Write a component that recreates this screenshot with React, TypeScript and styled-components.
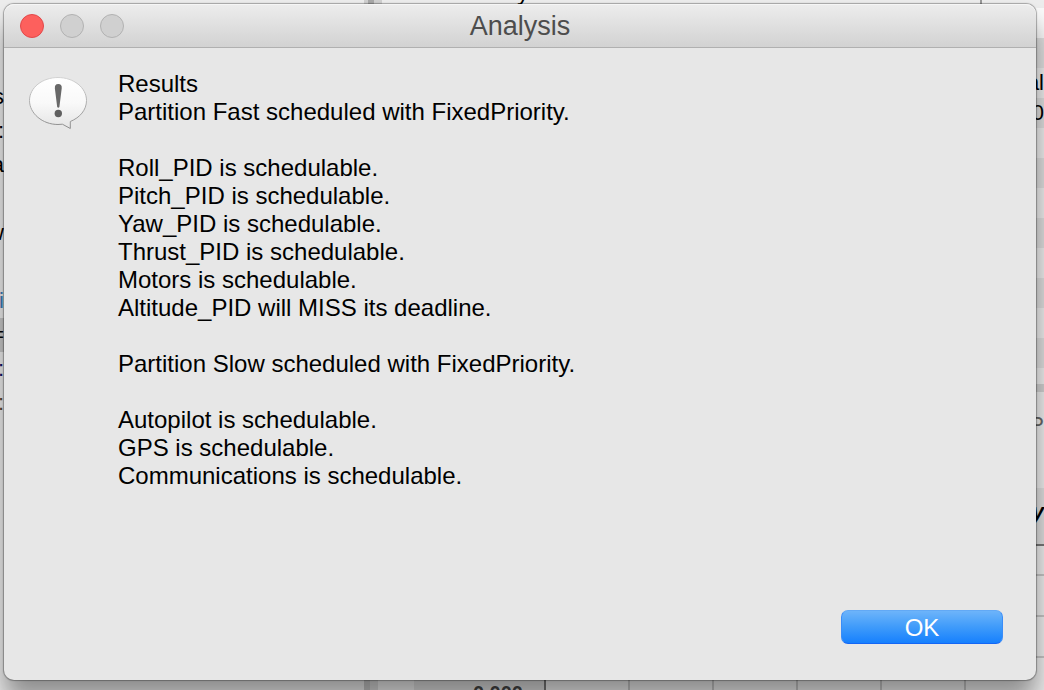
import React from "react";
import styled, { createGlobalStyle } from "styled-components";

const GlobalStyle = createGlobalStyle`
  * { box-sizing: border-box; }
  body {
    margin: 0;
    background: #ededed;
    color: #000;
    font: 24px/28px "Liberation Sans", Helvetica, Arial, sans-serif;
  }
`;

const Screen = styled.div`
  position: relative;
  display: flex;
  min-height: 100vh;
  padding: 4px 8px 10px 4px;
  overflow: hidden;
`;

/* The application window that lies behind the dialog. */
const Backdrop = styled.div`
  position: absolute;
  inset: 0;
  display: grid;
  grid-template-columns: 4px 1fr 8px;
  overflow: hidden;
`;

const EditorColumn = styled.div`
  padding-top: 80px;
  overflow: hidden;
`;

const EditorLine = styled.div<{ $selected?: boolean; $color?: string }>`
  display: flex;
  justify-content: flex-end;
  height: 34px;
  line-height: 34px;
  font-size: 22px;
  color: ${(p) => p.$color ?? "#000"};
  background: ${(p) => (p.$selected ? "#c8c8c8" : "transparent")};
`;

const Middle = styled.div`
  display: flex;
  flex-direction: column;
  justify-content: space-between;
  min-width: 0;
`;

const Strip = styled.div<{ $height: number }>`
  display: flex;
  height: ${(p) => p.$height}px;
  overflow: hidden;
`;

const Segment = styled.div<{ $width?: number; $fill?: string }>`
  flex: ${(p) => (p.$width ? `0 0 ${p.$width}px` : "1")};
  background: ${(p) => p.$fill ?? "transparent"};
`;

const HeadingTail = styled(Segment)`
  display: flex;
  align-items: flex-end;
  justify-content: flex-end;
  font-size: 24px;
  line-height: 24px;
`;

const AxisLabel = styled(Segment)`
  padding: 3px 21px 0 0;
  text-align: right;
  font-size: 20px;
  line-height: 20px;
  font-weight: bold;
  color: #444;
`;

const GridLines = styled(Segment)`
  background: repeating-linear-gradient(90deg, transparent 0 82px, #c4c4c4 82px 84px);
`;

const TableColumn = styled.div`
  overflow: hidden;
`;

const Cell = styled.div<{ $height: number; $fill?: string; $color?: string }>`
  display: flex;
  align-items: center;
  justify-content: flex-end;
  height: ${(p) => p.$height}px;
  font-size: 22px;
  line-height: 30px;
  color: ${(p) => p.$color ?? "#000"};
  background: ${(p) => p.$fill ?? "#ededed"};
`;

const PlotTitle = styled(Cell)`
  padding-bottom: 8px;
  font-weight: bold;
  font-style: italic;
  border-bottom: 2px solid #777;
`;

const Dialog = styled.section`
  position: relative;
  display: flex;
  flex: 1;
  flex-direction: column;
  min-width: 0;
  border-radius: 10px;
  background: #e7e7e7;
  box-shadow: 0 0 1px 1px rgba(0, 0, 0, 0.3), 0 20px 26px rgba(0, 0, 0, 0.4);
`;

const TitleBar = styled.header`
  display: grid;
  grid-template-columns: 1fr auto 1fr;
  align-items: center;
  height: 44px;
  padding: 0 16px;
  border-radius: 10px 10px 0 0;
  border-bottom: 1px solid #b0b0b0;
  background: linear-gradient(#ededed, #d2d2d2);
  box-shadow: inset 0 1px #f6f6f6;
`;

const WindowButtons = styled.div`
  display: flex;
  gap: 16px;
`;

const WindowButton = styled.button<{ $close?: boolean }>`
  width: 24px;
  height: 24px;
  padding: 0;
  border: 1px solid ${(p) => (p.$close ? "#e2484a" : "#b2b2b2")};
  border-radius: 50%;
  background: ${(p) => (p.$close ? "#fd605d" : "#d0d0d0")};
`;

const Title = styled.h1`
  margin: 0;
  font-size: 27px;
  line-height: 32px;
  font-weight: normal;
  color: #4d4d4d;
`;

const Content = styled.div`
  display: flex;
  flex: 1;
  gap: 28px;
  padding: 22px 33px 0 22px;
`;

const AlertIcon = styled.svg`
  flex: none;
  width: 64px;
  height: 64px;
`;

const Message = styled.p`
  margin: 0;
  white-space: pre-line;
`;

const Actions = styled.footer`
  display: flex;
  justify-content: flex-end;
  padding: 0 33px 36px;
`;

const DefaultButton = styled.button`
  width: 162px;
  height: 34px;
  padding: 2px 0 0;
  border: 1px solid;
  border-color: #62a9f5 #3a8df8 #1466f5;
  border-radius: 7px;
  background: linear-gradient(#6db4fa, #3f9bfa 50%, #1680fe);
  color: #fff;
  font: inherit;
  line-height: 28px;
`;

const results = `Results
Partition Fast scheduled with FixedPriority.

Roll_PID is schedulable.
Pitch_PID is schedulable.
Yaw_PID is schedulable.
Thrust_PID is schedulable.
Motors is schedulable.
Altitude_PID will MISS its deadline.

Partition Slow scheduled with FixedPriority.

Autopilot is schedulable.
GPS is schedulable.
Communications is schedulable.`;

const editorLines: { text: string; color?: string; selected?: boolean }[] = [
  { text: "s" },
  { text: ":" },
  { text: "a" },
  { text: "" },
  { text: "w" },
  { text: "" },
  { text: "i", color: "#3a78b8" },
  { text: "=", selected: true },
  { text: ":", color: "#101060" },
  { text: ":", color: "#5a4a30" },
];

const tableCells: { height: number; fill?: string; text?: string; color?: string }[] = [
  { height: 8, fill: "#ededed" },
  { height: 30, fill: "#fafafa" },
  { height: 30, fill: "#e0e0e0" },
  { height: 30, text: "al" },
  { height: 30, fill: "#dedede", text: "0" },
  { height: 30 },
  { height: 30, fill: "#dedede" },
  { height: 30 },
  { height: 30, fill: "#dedede" },
  { height: 30 },
  { height: 30, fill: "#dedede" },
  { height: 30 },
  { height: 30, fill: "#dedede" },
  { height: 16 },
  { height: 8, fill: "#d0d0d0" },
  { height: 66, text: "P", color: "#666" },
  { height: 30 },
];

const dashes = [28, 39, 39];

export default function App() {
  return (
    <>
      <GlobalStyle />
      <Screen>
        <Backdrop aria-hidden="true">
          <EditorColumn>
            {editorLines.map((line, i) => (
              <EditorLine key={i} $color={line.color} $selected={line.selected}>
                {line.text}
              </EditorLine>
            ))}
          </EditorColumn>
          <Middle>
            <Strip $height={4}>
              <Segment $width={360} />
              <Segment $width={4} $fill="#d0d0d0" />
              <Segment $width={6} $fill="#a8a8a8" />
              <Segment $width={8} $fill="#d0d0d0" />
              <HeadingTail $width={147}>y</HeadingTail>
              <Segment $width={451} />
              <Segment $width={2} $fill="#999" />
              <Segment />
            </Strip>
            <Strip $height={10}>
              <Segment $width={360} />
              <Segment $width={6} $fill="#c4c4c4" />
              <Segment $width={8} $fill="#d6d6d6" />
              <Segment $width={36} />
              <AxisLabel $width={130} $fill="#dcdcdc">
                0.000
              </AxisLabel>
              <Segment $width={2} $fill="#777" />
              <GridLines />
            </Strip>
          </Middle>
          <TableColumn>
            {tableCells.map((cell, i) => (
              <Cell key={i} $height={cell.height} $fill={cell.fill} $color={cell.color}>
                {cell.text}
              </Cell>
            ))}
            <PlotTitle $height={58} $fill="#dedede">
              y
            </PlotTitle>
            {dashes.map((height, i) => (
              <React.Fragment key={i}>
                <Cell $height={height} />
                <Cell $height={2} $fill="#c4c4c4" />
              </React.Fragment>
            ))}
          </TableColumn>
        </Backdrop>

        <Dialog role="alertdialog" aria-labelledby="dialog-title" aria-describedby="dialog-message">
          <TitleBar>
            <WindowButtons>
              <WindowButton $close aria-label="Close" />
              <WindowButton aria-label="Minimize" disabled />
              <WindowButton aria-label="Zoom" disabled />
            </WindowButtons>
            <Title id="dialog-title">Analysis</Title>
          </TitleBar>
          <Content>
            <AlertIcon viewBox="0 0 64 64" aria-hidden="true">
              <defs>
                <linearGradient id="bubble" x1="0" y1="0" x2="0" y2="1">
                  <stop offset="0" stopColor="#fff" />
                  <stop offset="0.5" stopColor="#f9f9f9" />
                  <stop offset="1" stopColor="#e4e4e4" />
                </linearGradient>
                <linearGradient id="rim" x1="0" y1="0" x2="0" y2="1">
                  <stop offset="0" stopColor="#d2d2d2" />
                  <stop offset="1" stopColor="#8c8c8c" />
                </linearGradient>
              </defs>
              <path
                d="M32 7.500C16.500 7.500 3.500 17.500 3.500 30.500S16.500 54.500 32 54.500C33.500 54.500 35 54.400 36.400 54.200L44.300 58.500V51.500C54 47.500 60.500 40 60.500 30.500C60.500 17.500 47.500 7.500 32 7.500Z"
                fill="url(#bubble)"
                stroke="url(#rim)"
                strokeWidth="1"
                strokeLinejoin="round"
              />
              <path
                d="M32.300 14C29.600 14 28.600 15.700 28.900 18.500L31.200 37Q32.300 38.600 33.400 37L35.700 18.500C36 15.700 35 14 32.300 14Z"
                fill="#686868"
              />
              <circle cx="32.300" cy="43.500" r="3.700" fill="#606060" />
            </AlertIcon>
            <Message id="dialog-message">{results}</Message>
          </Content>
          <Actions>
            <DefaultButton type="button">OK</DefaultButton>
          </Actions>
        </Dialog>
      </Screen>
    </>
  );
}
